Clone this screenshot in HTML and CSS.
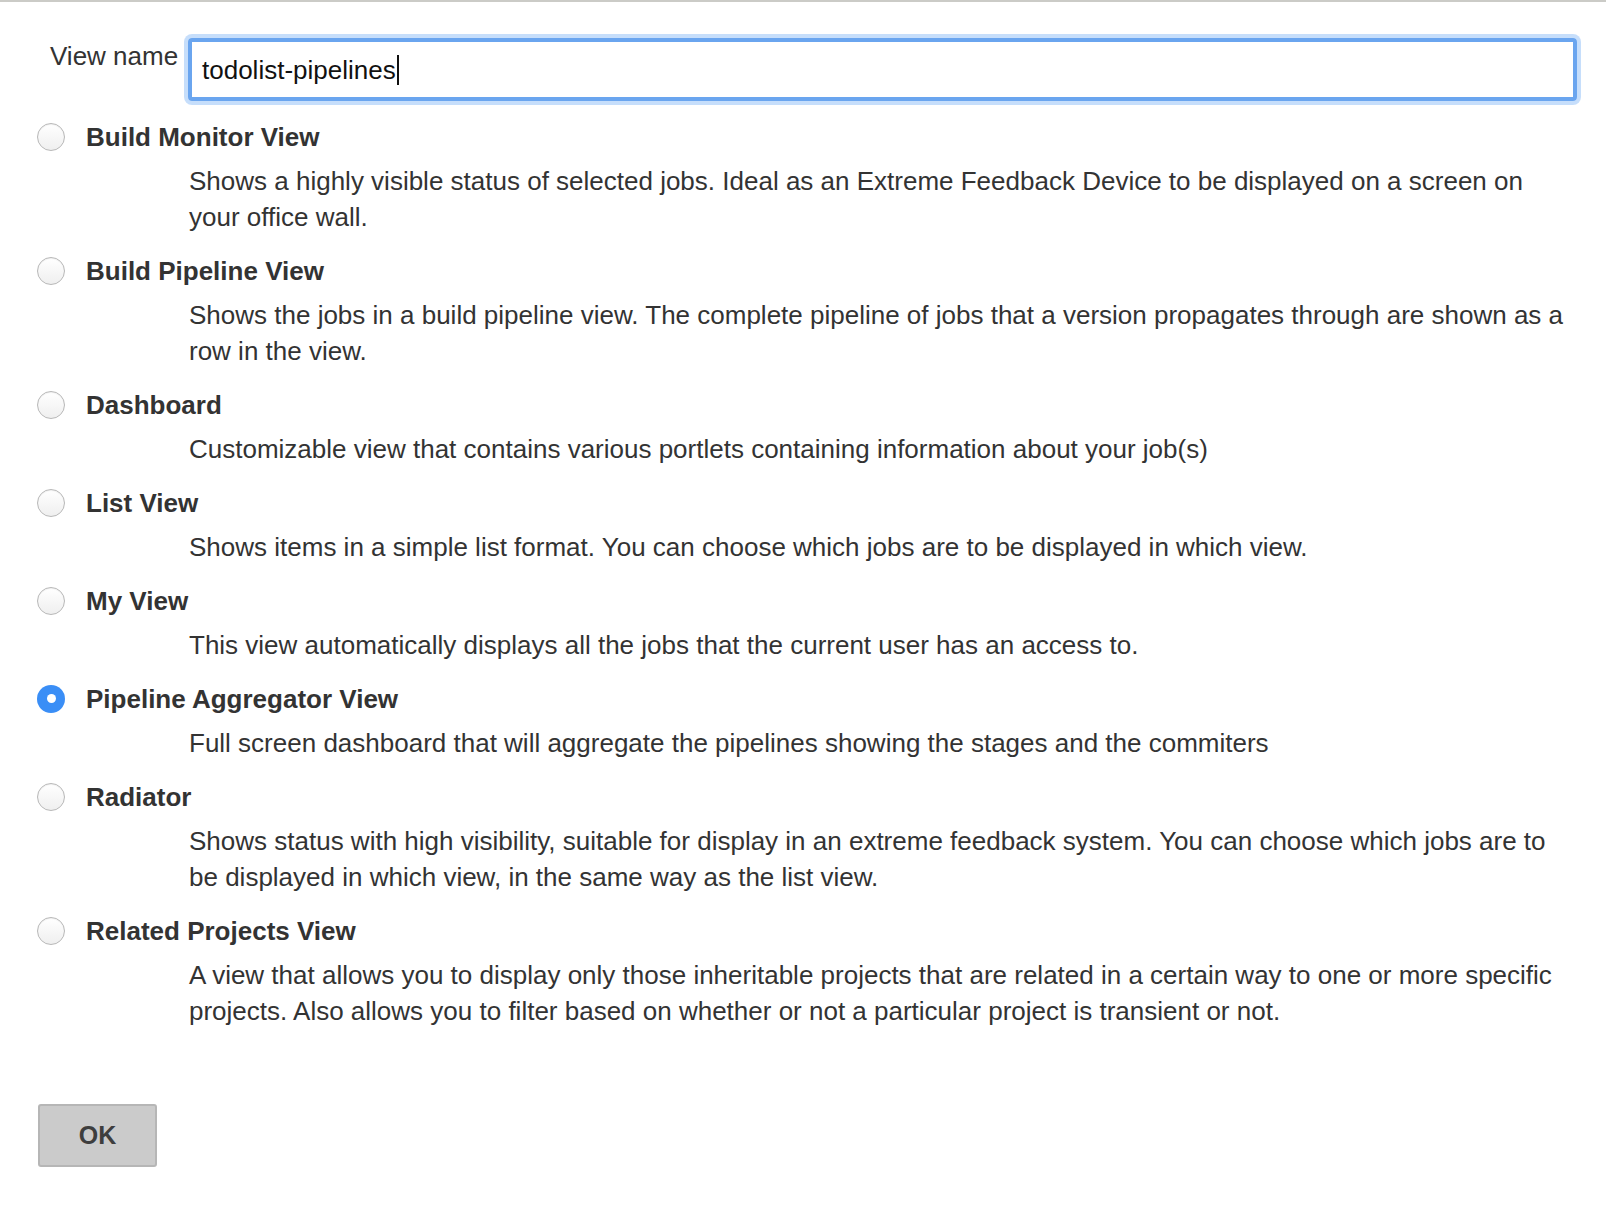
FILE: index.html
```html
<!DOCTYPE html>
<html lang="en">
<head>
<meta charset="utf-8">
<title>New View</title>
<link rel="stylesheet" href="styles.css">
</head>
<body>
<div class="topline"></div>
<form class="page">
  <div class="name-row">
    <label class="name-label">View name</label>
    <div class="name-input" role="textbox">todolist-pipelines<span class="caret"></span></div>
  </div>

  <div class="item">
    <div class="item-head"><span class="radio"></span><span class="title">Build Monitor View</span></div>
    <div class="desc">Shows a highly visible status of selected jobs. Ideal as an Extreme Feedback Device to be displayed on a screen on your office wall.</div>
  </div>
  <div class="item">
    <div class="item-head"><span class="radio"></span><span class="title">Build Pipeline View</span></div>
    <div class="desc">Shows the jobs in a build pipeline view. The complete pipeline of jobs that a version propagates through are shown as a row in the view.</div>
  </div>
  <div class="item">
    <div class="item-head"><span class="radio"></span><span class="title">Dashboard</span></div>
    <div class="desc">Customizable view that contains various portlets containing information about your job(s)</div>
  </div>
  <div class="item">
    <div class="item-head"><span class="radio"></span><span class="title">List View</span></div>
    <div class="desc">Shows items in a simple list format. You can choose which jobs are to be displayed in which view.</div>
  </div>
  <div class="item">
    <div class="item-head"><span class="radio"></span><span class="title">My View</span></div>
    <div class="desc">This view automatically displays all the jobs that the current user has an access to.</div>
  </div>
  <div class="item">
    <div class="item-head"><span class="radio checked"></span><span class="title">Pipeline Aggregator View</span></div>
    <div class="desc">Full screen dashboard that will aggregate the pipelines showing the stages and the commiters</div>
  </div>
  <div class="item">
    <div class="item-head"><span class="radio"></span><span class="title">Radiator</span></div>
    <div class="desc">Shows status with high visibility, suitable for display in an extreme feedback system. You can choose which jobs are to be displayed in which view, in the same way as the list view.</div>
  </div>
  <div class="item">
    <div class="item-head"><span class="radio"></span><span class="title">Related Projects View</span></div>
    <div class="desc">A view that allows you to display only those inheritable projects that are related in a certain way to one or more specific projects. Also allows you to filter based on whether or not a particular project is transient or not.</div>
  </div>

  <div class="actions">
    <button type="button" class="ok">OK</button>
  </div>
</form>
</body>
</html>
```

FILE: styles.css
```css
html, body {
  margin: 0;
  padding: 0;
  background: #ffffff;
}
body {
  font-family: "Liberation Sans", Arial, Helvetica, sans-serif;
  font-size: 26px;
  line-height: 36px;
  color: #333333;
}
.topline {
  height: 2px;
  background: #cbcbc7;
}
.page {
  width: 1571px;
  margin: 0;
  padding: 36px 0 0 0;
}
.name-row {
  display: flex;
  align-items: flex-start;
}
.name-label {
  width: 188px;
  padding-left: 50px;
  box-sizing: border-box;
  flex: none;
  white-space: nowrap;
  color: #333;
}
.name-input {
  flex: none;
  width: 1389px;
  height: 63px;
  box-sizing: border-box;
  border: 4px solid #6aa5ef;
  border-radius: 4px;
  box-shadow: 0 0 0 4px rgba(160, 200, 248, 0.6);
  padding: 0 0 0 10px;
  display: flex;
  align-items: center;
  color: #111;
  font-size: 26px;
  line-height: 30px;
}
.caret {
  display: inline-block;
  width: 2px;
  height: 30px;
  background: #111;
  margin-left: 1px;
}
.item {
  margin-bottom: 18px;
}
.name-row + .item {
  margin-top: 18px;
}
.item-head {
  display: flex;
  align-items: center;
  height: 36px;
  padding-left: 37px;
}
.radio {
  flex: none;
  width: 28px;
  height: 28px;
  box-sizing: border-box;
  border-radius: 50%;
  border: 1.5px solid #b8b8b8;
  background: linear-gradient(#ffffff, #efefef);
  box-shadow: inset 0 1px 1px rgba(0,0,0,0.06);
  margin-top: -1px;
  position: relative;
}
.radio.checked {
  border: none;
  background: #3a8ef6;
  box-shadow: none;
}
.radio.checked::after {
  content: "";
  position: absolute;
  left: 9.5px;
  top: 9.5px;
  width: 9px;
  height: 9px;
  border-radius: 50%;
  background: #ffffff;
}
.title {
  margin-left: 21px;
  font-weight: bold;
  color: #333;
}
.desc {
  margin-top: 8px;
  padding-left: 189px;
  color: #333;
}
.actions {
  padding-top: 57px;
  padding-left: 38px;
}
.ok {
  width: 119px;
  height: 63px;
  box-sizing: border-box;
  background: #cbcbcb;
  border: 2px solid #b6b6b6;
  border-radius: 3px;
  font-family: "Liberation Sans", Arial, Helvetica, sans-serif;
  font-size: 25px;
  font-weight: bold;
  color: #3e3e3e;
  padding: 0;
}
```
